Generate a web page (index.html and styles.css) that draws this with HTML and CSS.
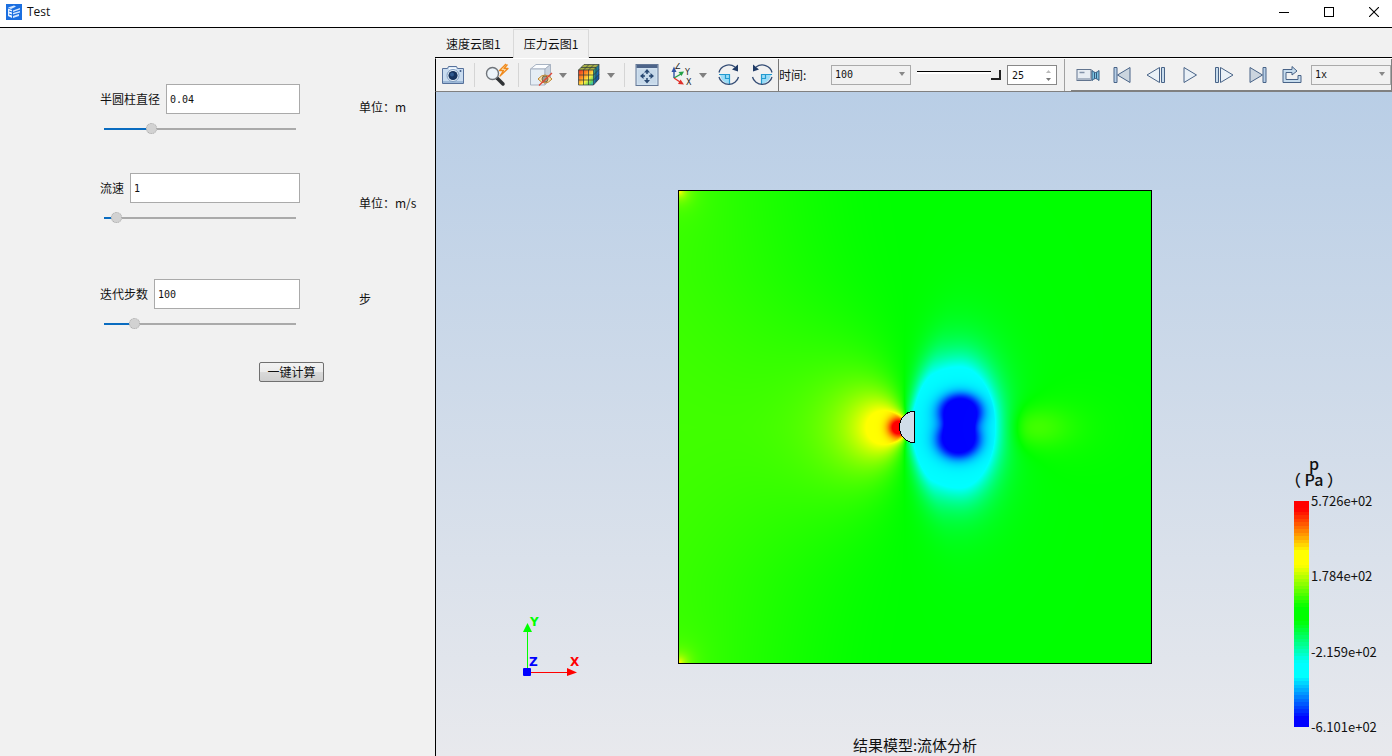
FILE: index.html
```html
<!DOCTYPE html>
<html lang="zh-CN">
<head>
<meta charset="utf-8">
<title>Test</title>
<link rel="stylesheet" href="styles.css">
</head>
<body>
<header class="titlebar">
  <svg class="app-icon" width="16" height="16" viewBox="0 0 16 16" aria-hidden="true">
    <rect width="16" height="16" fill="#1b6fe0"/>
    <path d="M2 4.500 6 6v8L2 12z" fill="#e8f2ff"/>
    <path d="M2 3.500 8 1.500 10 2.500 5 5zM7 6.500 14 4v1.500L7 8zM7 9 14 7v1.500L7 10.500zM7 12l6-2v2l-6 2z" fill="#d6e8ff"/>
    <path d="M3 7l3 1M3 10l3 1" stroke="#1b6fe0"/>
  </svg>
  <h1 class="app-title">Test</h1>
  <div class="window-buttons">
    <button class="window-button" aria-label="最小化"><svg width="10" height="10" viewBox="0 0 10 10"><path d="M0 5.500h10" stroke="#000"/></svg></button>
    <button class="window-button" aria-label="最大化"><svg width="10" height="10" viewBox="0 0 10 10"><rect x=".5" y=".5" width="9" height="9" fill="none" stroke="#000"/></svg></button>
    <button class="window-button" aria-label="关闭"><svg width="10" height="10" viewBox="0 0 10 10"><path d="M0 0l10 10M10 0 0 10" stroke="#000" stroke-width="1.100"/></svg></button>
  </div>
</header>

<main class="workspace">
  <form class="params">
    <div class="fields">
      <div class="field">
        <div class="field-row"><label for="diameter">半圆柱直径</label><input class="field-input" id="diameter" type="text" value="0.04"></div>
        <input class="param-slider" type="range" aria-label="半圆柱直径" value="23" style="--fill:23%">
      </div>
      <div class="field">
        <div class="field-row"><label for="speed">流速</label><input class="field-input" id="speed" type="text" value="1"></div>
        <input class="param-slider" type="range" aria-label="流速" value="4" style="--fill:4%">
      </div>
      <div class="field field-steps">
        <div class="field-row"><label for="steps">迭代步数</label><input class="field-input" id="steps" type="text" value="100"></div>
        <input class="param-slider" type="range" aria-label="迭代步数" value="14" style="--fill:14%">
      </div>
      <button class="compute" type="button">一键计算</button>
    </div>
    <div class="units"><span>单位：m</span><span>单位：m/s</span><span>步</span></div>
  </form>

  <section class="results">
    <div class="tabs" role="tablist">
      <button class="tab" role="tab" aria-selected="false">速度云图1</button>
      <button class="tab tab-active" role="tab" aria-selected="true">压力云图1</button>
      <div class="tab-rest"></div>
    </div>

    <div class="toolbar">
      <div class="tools">
        <button class="tool" aria-label="截图"><svg width="24" height="24" viewBox="0 0 24 24">
          <path d="M1.500 5.500h5l1-2h8l1 2h6v15h-21z" fill="#c9dcf0" stroke="#56719b"/>
          <path d="M2 18h20v2H2z" fill="#9db9d8"/><rect x="8" y="4.500" width="7" height="2" fill="#f5faff"/>
          <circle cx="12" cy="12.500" r="6" fill="#e9f2fa" stroke="#7f9cc0"/><circle cx="12" cy="12.500" r="4.600" fill="#17345f"/><circle cx="11" cy="11.500" r="2" fill="#315b90"/>
          <circle cx="19.500" cy="8" r="1" fill="#405d88"/></svg></button>
        <i class="sep"></i>
        <button class="tool" aria-label="快速缩放"><svg width="24" height="24" viewBox="0 0 24 24">
          <path d="M12 15l6 6" stroke="#303336" stroke-width="3.500" stroke-linecap="round"/>
          <circle cx="7.500" cy="10.500" r="6" fill="#edf4fa" stroke="#70757b" stroke-width="1.400"/>
          <path d="M21 1 14.500 7.500h4L15 13l8-7.500h-4l3.500-4" fill="#fff0cc" stroke="#f08a1c" stroke-width="1.300" stroke-linejoin="round"/></svg></button>
        <i class="sep"></i>
        <button class="tool" aria-label="显示隐藏"><svg width="24" height="24" viewBox="0 0 24 24">
          <path d="M1.500 6 7 1.500h14.500L16 6z" fill="#fbfdff" stroke="#a8b3c2"/><path d="M1.500 6H16v16H1.500z" fill="#e5edf5" stroke="#a8b3c2"/><path d="M16 6l5.500-4.500V16L16 22z" fill="#c8d2df" stroke="#a8b3c2"/>
          <path d="M9 16q7-8 14 0-7 8-14 0z" fill="#fbe4b0" stroke="#bc8430"/><circle cx="16" cy="16" r="3" fill="#9c9a92" stroke="#846b3d"/><path d="M10 22.500 23 10" stroke="#e04534" stroke-width="1.300"/></svg></button>
        <button class="drop" aria-label="显示选项"><svg width="8" height="5" viewBox="0 0 8 5"><path d="M0 0h8L4 5z"/></svg></button>
        <button class="tool" aria-label="云图"><svg width="24" height="24" viewBox="0 0 24 24">
          <defs><linearGradient id="cubeFace" x1="0" y1="0" x2="1" y2="1"><stop offset="0" stop-color="#e92c20"/><stop offset=".35" stop-color="#ff8b24"/><stop offset=".6" stop-color="#ffee42"/><stop offset=".8" stop-color="#6bdc57"/><stop offset="1" stop-color="#20aee5"/></linearGradient>
          <linearGradient id="cubeSide" x1="0" y1="0" x2="1" y2="1"><stop offset="0" stop-color="#3ab54a"/><stop offset=".6" stop-color="#1769ba"/><stop offset="1" stop-color="#102a80"/></linearGradient></defs>
          <path d="M1.500 7 7 1.500h15L16.500 7z" fill="#a6ad45"/><path d="M1.500 7h15v15h-15z" fill="url(#cubeFace)"/><path d="M16.500 7 22 1.500V16l-5.500 6z" fill="url(#cubeSide)"/>
          <path d="M1.500 7h15v15h-15zL7 1.500h15V16l-5.500 6M16.500 7 22 1.500M6.500 7v15M11.500 7v15M1.500 12h15L22 6.500M1.500 17h15l5.500-5.500M6.500 7 12 1.500M11.500 7 17 1.500M4 4.500h15V19" fill="none" stroke="#29373b" stroke-width=".7"/></svg></button>
        <button class="drop" aria-label="云图选项"><svg width="8" height="5" viewBox="0 0 8 5"><path d="M0 0h8L4 5z"/></svg></button>
        <i class="sep"></i>
        <button class="tool" aria-label="适应窗口"><svg width="24" height="24" viewBox="0 0 24 24">
          <rect x="1" y="1.500" width="22" height="21" fill="#cfe0ef" stroke="#637796"/><path d="M1.500 2h21v3h-21z" fill="#4d6489"/><path d="M3 6.500h18v14H3z" fill="#c6d8e9"/>
          <path d="M12 6l3 3.500H9zM12 20.500 9 17h6zM5 13l3.500-3v6zM19 13l-3.500 3v-6z" fill="#294872"/><path d="M12 9v2M12 15v2M8 13h2M14 13h2" stroke="#294872" stroke-width="1.500"/></svg></button>
        <button class="tool" aria-label="视图方向"><svg width="24" height="24" viewBox="0 0 24 24">
          <path d="M5 15V7" stroke="#3154a5" stroke-width="1.400"/><path d="M5 3.500 7.500 9h-5z" fill="#3154a5"/><path d="M5 15l7-4" stroke="#25a046" stroke-width="1.400"/><path d="M15 8.500 12.500 13l-3-4z" fill="#25a046"/><path d="M5 15l6 4" stroke="#df312b" stroke-width="1.400"/><path d="M15 21.500 9 21l2.500-4.500z" fill="#df312b"/>
          <g class="icon-letters"><text x="6" y="6">Z</text><text x="16" y="12">Y</text><text x="17" y="22">X</text></g></svg></button>
        <button class="drop" aria-label="视图选项"><svg width="8" height="5" viewBox="0 0 8 5"><path d="M0 0h8L4 5z"/></svg></button>
        <button class="tool" aria-label="顺时针旋转"><svg width="24" height="24" viewBox="0 0 24 24">
          <path d="M3 12h9v9q-7-1-9-9z" fill="#9bdcf7"/><path d="M2 11.500h10.500V22M8.500 12v3.500h4" fill="none" stroke="#239bd0" stroke-width="1.200"/><path d="M2 9.500A10 9.500 0 0 1 18 4M21.500 14A10 9.500 0 0 1 2 14" fill="none" stroke="#354d75" stroke-width="1.300"/><path d="M21 1.500v7l-6-2z" fill="#203b66"/></svg></button>
        <button class="tool tool-last" aria-label="逆时针旋转"><svg width="24" height="24" viewBox="0 0 24 24">
          <path d="M21 12h-9v9q7-1 9-9z" fill="#9bdcf7"/><path d="M22 11.500H11.500V22M15.500 12v3.500h-4" fill="none" stroke="#239bd0" stroke-width="1.200"/><path d="M22 9.500A10 9.500 0 0 0 6 4M2.500 14a10 9.500 0 0 0 19.500 0" fill="none" stroke="#354d75" stroke-width="1.300"/><path d="M3 1.500v7l6-2z" fill="#203b66"/></svg></button>
      </div>
      <div class="time">
        <label class="time-label" for="time">时间:</label>
        <span class="combo"><select class="select" id="time"><option>100</option></select><svg class="combo-arrow" width="6" height="4" viewBox="0 0 6 4"><path d="M0 0h6L3 4z"/></svg></span>
        <input class="time-slider" type="range" aria-label="帧" min="0" max="25" value="25">
        <span class="spin"><input class="spin-input" type="number" aria-label="帧数" value="25"><svg class="spin-arrows" width="5" height="11" viewBox="0 0 5 11"><path d="M0 3h5L2.500 0z" fill="#bbb"/><path d="M0 8h5l-2.500 3z" fill="#777"/></svg></span>
      </div>
      <div class="playback">
        <button class="tool" aria-label="录制"><svg width="24" height="24" viewBox="0 0 24 24">
          <rect x="1" y="6.500" width="14" height="11" fill="#e7edf3" stroke="#62758f"/><path d="M3.500 9.500h5" stroke="#8393a9" stroke-width="1.500"/><path d="M2 16h13" stroke="#aab6c6" stroke-width="2"/><path d="M16 7.500q2 2 3.500 2t3.500-2v10q-2-2-3.500-2t-3.500 2z" fill="#7cc4e2" stroke="#34587e"/><path d="M18.500 9.500v6M20.500 9.500v6" stroke="#34587e"/></svg></button>
        <button class="tool" aria-label="第一帧"><svg width="24" height="24" viewBox="0 0 24 24"><path d="M4 4.500h3v15H4z" fill="#b9d0e7" stroke="#486387"/><path d="M20 4.500v15L7.500 12z" fill="#cbd5df" stroke="#486387"/></svg></button>
        <button class="tool" aria-label="上一帧"><svg width="24" height="24" viewBox="0 0 24 24"><path d="M15.500 4.500v15L3 12z" fill="#e9f0f6" stroke="#486387"/><path d="M17.500 4.500h3v15h-3z" fill="#c8dcec" stroke="#486387"/></svg></button>
        <button class="tool" aria-label="播放"><svg width="24" height="24" viewBox="0 0 24 24"><path d="M6 4.500v15L18.500 12z" fill="#e9f0f6" stroke="#486387"/></svg></button>
        <button class="tool" aria-label="下一帧"><svg width="24" height="24" viewBox="0 0 24 24"><path d="M8.500 4.500v15L21 12z" fill="#e9f0f6" stroke="#486387"/><path d="M3.500 4.500h3v15h-3z" fill="#c8dcec" stroke="#486387"/></svg></button>
        <button class="tool" aria-label="最后一帧"><svg width="24" height="24" viewBox="0 0 24 24"><path d="M17 4.500h3v15h-3z" fill="#b9d0e7" stroke="#486387"/><path d="M4 4.500v15L16.500 12z" fill="#cbd5df" stroke="#486387"/></svg></button>
        <button class="tool" aria-label="循环"><svg width="24" height="24" viewBox="0 0 24 24"><path d="M3 19.500v-13h9V3.500l5 4.500-5 4V9.500H6v7h12v-4h3v7z" fill="#c7dced" stroke="#486387" stroke-linejoin="round"/></svg></button>
        <span class="combo combo-speed"><select class="select" aria-label="速度"><option>1x</option></select><svg class="combo-arrow" width="6" height="4" viewBox="0 0 6 4"><path d="M0 0h6L3 4z"/></svg></span>
      </div>
    </div>

    <div class="viewport">
      <figure class="plot">
        <canvas class="plot-field" id="field" width="472" height="472"></canvas>
        <svg class="plot-body" viewBox="0 0 472 472" shape-rendering="crispEdges" aria-hidden="true"><path d="M235.500 220.500h-3a15.500 15.500 0 0 0-12 15.500 15.500 15.500 0 0 0 12 15.500h3z" fill="#d0dce8" stroke="#000"/></svg>
      </figure>
      <svg class="triad" width="70" height="70" viewBox="0 0 70 70">
        <path d="M11.500 56V12" stroke="#0f0"/><path d="M11.500 7 16 16H7z" fill="#0f0"/>
        <path d="M11 56.500h42" stroke="#f00"/><path d="M61 56.500 51 52v8z" fill="#f00"/>
        <rect x="7" y="52" width="8" height="8" rx="1" fill="#00f"/>
        <text x="14" y="10" fill="#0f0">Y</text><text x="13" y="50" fill="#00f">Z</text><text x="54" y="50" fill="#f00">X</text>
      </svg>
      <div class="legend">
        <div class="legend-title"><span>p</span><span>（&nbsp;Pa&nbsp;）</span></div>
        <div class="legend-scale">
          <canvas class="legend-bar" id="scale" width="1" height="64"></canvas>
          <div class="legend-values"><span>5.726e+02</span><span>1.784e+02</span><span>-2.159e+02</span><span>-6.101e+02</span></div>
        </div>
      </div>
      <p class="caption">结果模型:流体分析</p>
    </div>
  </section>
</main>
<script src="field.js"></script>
</body>
</html>
```
FILE: styles.css
```css
* { box-sizing: border-box; }
body {
  margin: 0;
  min-height: 100vh;
  display: flex;
  flex-direction: column;
  background: #f1f1f1;
  color: #111;
  font: 12px/20px "Noto Sans CJK SC", sans-serif;
}
button, input, select { font: inherit; color: inherit; margin: 0; }
button { padding: 0; border: 0; background: none; }
svg { display: block; flex: none; }

.titlebar {
  display: flex;
  align-items: center;
  height: 28px;
  padding: 0 13px 4px 6px;
  background: #fff;
  border-bottom: 1px solid #000;
}
.app-title { margin: 0 0 0 5px; font: 12px/16px "Open Sans", sans-serif; }
.window-buttons { display: flex; gap: 35px; margin-left: auto; }

.workspace { flex: 1; display: flex; }
.params { width: 435px; flex: none; display: flex; padding: 56px 0 0 100px; }
.fields { width: 224px; }
.field { width: 200px; margin-bottom: 39px; }
.field-steps { margin: 56px 0 33px; }
.field-row { display: flex; align-items: center; gap: 6px; }
.field-row label { flex: none; }
.field-input {
  flex: 1;
  min-width: 0;
  height: 30px;
  padding: 0 3px;
  border: 1px solid #aaa;
  background: #fff;
  font: 10px/20px "DejaVu Sans Mono", monospace;
}
.param-slider {
  display: block;
  width: 192px;
  height: 11px;
  margin: 9px 4px 0;
  appearance: none;
  background: linear-gradient(#0a6cc0, #0a6cc0) 0 50% / var(--fill) 2px no-repeat, linear-gradient(#aaa, #aaa) 0 50% / 100% 2px no-repeat;
}
.param-slider::-webkit-slider-thumb {
  appearance: none;
  width: 11px;
  height: 11px;
  border: 1px dotted #aaa;
  border-radius: 50%;
  background: #d2d2d2;
}
.compute {
  display: block;
  width: 65px;
  height: 20px;
  margin-left: auto;
  border: 1px solid #707070;
  border-radius: 2px;
  background: linear-gradient(#f2f2f2, #ebebeb 50%, #dadada 50%, #cfcfcf);
  line-height: 18px;
}
.units { display: flex; flex-direction: column; gap: 76px; padding: 13px 0 0 35px; }

.results { flex: 1; min-width: 0; display: flex; flex-direction: column; }
.tabs { display: flex; height: 30px; padding-top: 1px; }
.tab { padding: 2px 11px 0; border-bottom: 1px solid #000; }
.tab:first-child { padding-right: 12px; }
.tab-active { padding: 0 10px; border: 1px solid #d9d9d9; border-bottom: 0; }
.tab-rest { flex: 1; border-bottom: 1px solid #000; }

.toolbar {
  display: flex;
  height: 34px;
  border-top: 1px solid #fff;
  border-left: 1px solid #000;
  border-bottom: 1px solid #808080;
}
.tools { display: flex; align-items: center; border-right: 1px solid #777; }
.tool { width: 34px; height: 32px; display: grid; place-items: center; }
.tool-last { width: 32px; }
.drop { width: 14px; height: 32px; padding-right: 4px; display: grid; place-items: center; fill: #808080; }
.sep { width: 10px; height: 24px; background: linear-gradient(#d5d5d5, #d5d5d5) 4px 0 / 1px 100% no-repeat; }
.icon-letters { font: 8px "DejaVu Sans", sans-serif; fill: #222; }

.time {
  flex: 1;
  min-width: 0;
  display: flex;
  align-items: center;
  padding-right: 7px;
  border-right: 1px solid #a0a0a0;
}
.time-label { width: 52px; flex: none; }
.combo { position: relative; width: 80px; flex: none; height: 20px; }
.select {
  display: block;
  width: 100%;
  height: 20px;
  padding: 0 3px;
  appearance: none;
  border: 1px solid #aaa;
  border-radius: 0;
  background: #f1f1f1;
  font: 10px/18px "DejaVu Sans Mono", monospace;
}
.combo-arrow { position: absolute; right: 6px; top: 7px; fill: #888; pointer-events: none; }
.time-slider {
  flex: 1;
  min-width: 0;
  height: 12px;
  margin: 0 6px;
  appearance: none;
  background: linear-gradient(#000 1px, #fff 1px) 0 2px / 100% 3px no-repeat;
}
.time-slider::-webkit-slider-thumb {
  appearance: none;
  width: 10px;
  height: 10px;
  border: solid #222;
  border-width: 0 2px 2px 0;
  background: #f1f1f1;
}
.spin { position: relative; width: 50px; flex: none; }
.spin-input {
  display: block;
  width: 100%;
  height: 20px;
  padding: 0 4px;
  border: 1px solid #888;
  background: #fff;
  appearance: textfield;
  font: 10px/18px "DejaVu Sans Mono", monospace;
}
.spin-input::-webkit-inner-spin-button { display: none; }
.spin-arrows { position: absolute; right: 6px; top: 5px; pointer-events: none; }
.playback {
  display: flex;
  align-items: center;
  margin-left: 6px;
  border-right: 1px solid #808080;
  border-bottom: 1px solid #808080;
}
.combo-speed { margin-left: 2px; }

.viewport {
  position: relative;
  flex: 1;
  display: flex;
  justify-content: center;
  align-items: center;
  padding: 6px 0 0 2px;
  border-left: 1px solid #000;
  background: linear-gradient(#b9cee6, #e8e9ed);
}
.plot { position: relative; width: 474px; margin: 0; border: 1px solid #000; }
.plot-field { display: block; width: 100%; }
.plot-body { position: absolute; inset: 0; }
.triad { position: absolute; left: 80px; bottom: 70px; font: bold 12px "DejaVu Sans", sans-serif; }
.legend { position: absolute; right: 14px; bottom: 19px; width: 84px; }
.legend-title {
  display: grid;
  justify-content: center;
  justify-items: center;
  width: 40px;
  margin-bottom: 4px;
  font-size: 16px;
  font-weight: 500;
  line-height: 16px;
  white-space: nowrap;
}
.legend-scale { display: flex; align-items: center; gap: 2px; }
.legend-bar { width: 15px; height: 226px; margin: 9px 0; image-rendering: pixelated; }
.legend-values { display: flex; flex-direction: column; justify-content: space-between; height: 246px; font-size: 13px; line-height: 20px; }
.caption {
  position: absolute;
  left: 2px;
  right: 0;
  bottom: 0;
  margin: 0;
  text-align: center;
  font-size: 15px;
  line-height: 22px;
}
```
FILE: field.js
```javascript
// Levels run from -2 (blue) through -1 (cyan), 0 (green), 1 (yellow) to 2 (red).
function clamp(v, lo, hi) { return Math.min(hi, Math.max(lo, v)); }

function levelColor(u) {
  const a = clamp(Math.abs(u), 0, 2);
  const near = 255 * clamp(a, 0, 1);
  const green = 255 * clamp(2 - a, 0, 1);
  return u >= 0 ? [near, green, 0] : [0, green, near];
}

function smooth(lo, hi, v) {
  const t = clamp((v - lo) / (hi - lo), 0, 1);
  return t * t * (3 - 2 * t);
}

function pressure(x, y) {
  const dy = y - 236;
  const ady = Math.abs(dy);

  // Upstream side: gentle rise toward the inlet plus the stagnation zone.
  let u = 0.21 * (1 - smooth(-60, 215, x - Math.max(0, 30 - ady / 5)));
  const fx = 228 - x;
  const r = Math.hypot(fx, dy) + 0.01;
  if (fx > 0) {
    u += Math.min(1, 1.75 * Math.pow(fx / r, 1.3) / (1 + Math.pow(r / 46, 2.2)));
  }
  u = Math.min(u, 1);
  u += 1.5 * Math.exp(-(Math.pow(x - 219, 2) + dy * dy) / 95);

  // Wake: low-pressure halo around two vortex cores.
  const wx = x - 280;
  const s = Math.hypot(wx / (wx < 0 ? 60 : 38), dy / 65);
  u -= 1.7 / (1 + Math.pow(s, 4.8)) * smooth(221, 234 + ady * 0.35, x);
  u = Math.max(u, -1);
  const top = Math.hypot((x - 281) / 22, (y - 220) / 18);
  const low = Math.hypot((x - 279) / 22, (y - 248) / 19);
  u -= Math.min(1, 1.1 / (1 + Math.pow(top, 6)) + 1.1 / (1 + Math.pow(low, 6)));

  // Downstream recovery.
  const rx = x - 350;
  u += 0.26 * Math.exp(-Math.pow(rx / (rx < 0 ? 18 : 38), 2) - dy * dy / 420);
  u += 0.06 * Math.exp(-Math.pow((x - 375) / 60, 2) - dy * dy / 1600);

  // Inlet corners.
  const corner = Math.hypot(x, Math.min(y, 471 - y));
  u += 0.75 * Math.exp(-corner / 7) + 0.1 * Math.exp(-corner / 25);
  return u;
}

function paint(canvas, level) {
  const ctx = canvas.getContext("2d");
  const image = ctx.createImageData(canvas.width, canvas.height);
  let i = 0;
  for (let y = 0; y < canvas.height; y++) {
    for (let x = 0; x < canvas.width; x++) {
      const [r, g, b] = levelColor(level(x, y));
      image.data.set([r, g, b, 255], i);
      i += 4;
    }
  }
  ctx.putImageData(image, 0, 0);
}

paint(document.getElementById("field"), pressure);
paint(document.getElementById("scale"), (x, y) => {
  const v = 2 - y / 63 * 4;
  const base = Math.floor(v);
  return base + clamp((v - base - 0.5) * 1.3 + 0.5, 0, 1);
});
```
